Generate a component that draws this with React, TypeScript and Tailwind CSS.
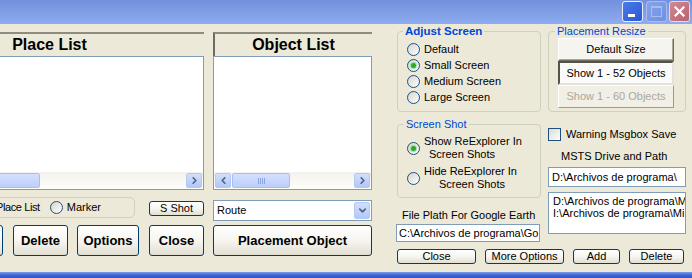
import React from "react";
import { ChevronLeft, ChevronRight, ChevronDown } from "lucide-react";

function Radio({ checked }: { checked?: boolean }) {
  return (
    <span className="flex h-[13px] w-[13px] shrink-0 items-center justify-center rounded-full border border-[#1c5180] bg-linear-to-br from-[#d6d4cc] to-white">
      {checked && (
        <span className="h-[5px] w-[5px] rounded-full bg-[#2ea82e] shadow-[0_0_1px_1px_#9ddf9d]" />
      )}
    </span>
  );
}

function ScrollArrow({ dir }: { dir: "left" | "right" | "down" }) {
  return (
    <span className="flex h-[15px] w-[16px] shrink-0 items-center justify-center rounded-[2px] border border-[#b4c8f6] bg-linear-to-b from-[#d2dffc] to-[#b3c8f7]">
      {dir === "left" && <ChevronLeft size={11} strokeWidth={3.5} color="#4d6185" />}
      {dir === "right" && <ChevronRight size={11} strokeWidth={3.5} color="#4d6185" />}
      {dir === "down" && <ChevronDown size={11} strokeWidth={3.5} color="#4d6185" />}
    </span>
  );
}

function HScroll({ thumbWidth, grip }: { thumbWidth: number; grip?: boolean }) {
  return (
    <div className="flex h-[17px] shrink-0 items-center bg-linear-to-b from-[#f3f1ec] to-[#fefefb] px-[1px]">
      <ScrollArrow dir="left" />
      <div className="flex h-[15px] flex-1 items-center pl-[1px]">
        <div
          className="flex h-[15px] items-center justify-center gap-[1px] rounded-[2px] border border-[#a8bff3] bg-linear-to-b from-[#d4e0fd] to-[#bccffa]"
          style={{ width: thumbWidth }}
        >
          {grip && (
            <>
              <span className="h-[6px] w-[1px] bg-[#8aa4e6]" />
              <span className="h-[6px] w-[1px] bg-[#8aa4e6]" />
              <span className="h-[6px] w-[1px] bg-[#8aa4e6]" />
              <span className="h-[6px] w-[1px] bg-[#8aa4e6]" />
            </>
          )}
        </div>
      </div>
      <ScrollArrow dir="right" />
    </div>
  );
}

function ListPanel({
  title,
  widthClass,
  thumbWidth,
  grip,
}: {
  title: string;
  widthClass: string;
  thumbWidth: number;
  grip?: boolean;
}) {
  return (
    <div className={"flex shrink-0 flex-col " + widthClass}>
      <div className="flex h-[24px] items-center justify-center border-t-2 border-l-2 border-t-[#8e8b7f] border-l-[#6f6d63] text-[16px] font-bold leading-none">
        {title}
      </div>
      <div className="flex h-[134px] flex-col justify-end border border-[#7f9db9] bg-white">
        <HScroll thumbWidth={thumbWidth} grip={grip} />
      </div>
    </div>
  );
}

function XpButton({
  children,
  className,
}: {
  children?: React.ReactNode;
  className: string;
}) {
  return (
    <div
      className={
        "flex shrink-0 items-center justify-center rounded-[3px] border border-[#003c74] bg-linear-to-b from-white via-[#f6f5f0] to-[#e2dfd2] text-black " +
        className
      }
    >
      {children}
    </div>
  );
}

export default function App() {
  return (
    <div className="flex h-[278px] w-[692px] flex-col overflow-hidden bg-[#ece9d8] font-['Liberation_Sans',Arial,sans-serif] text-[11px] leading-none text-black">
      {/* Title bar */}
      <div className="flex h-[24px] shrink-0 items-start justify-end bg-linear-to-b from-[#7390dc] to-[#8eacf0] pr-[2px] pt-[1px]">
        <div className="flex h-[21px] w-[21px] items-end justify-start rounded-[3px] border border-[#e8eefc] bg-linear-to-br from-[#4c7ae8] to-[#2a58d4] pb-[4px] pl-[5px]">
          <span className="h-[3px] w-[7px] bg-white" />
        </div>
        <div className="ml-[3px] flex h-[21px] w-[21px] items-center justify-center rounded-[3px] border border-[#a9bdf0] bg-linear-to-br from-[#86a2ea] to-[#6f8fe2]">
          <span className="h-[11px] w-[11px] border border-t-2 border-[#a9bcef]" />
        </div>
        <div className="ml-[2px] flex h-[21px] w-[21px] items-center justify-center rounded-[3px] border border-[#ecd7dc] bg-linear-to-br from-[#d08a92] to-[#b9626e]">
          <svg width="11" height="11" viewBox="0 0 11 11">
            <path d="M1.5 1.5 L9.5 9.5 M9.5 1.5 L1.5 9.5" stroke="white" strokeWidth="2.2" strokeLinecap="square" />
          </svg>
        </div>
      </div>

      {/* Main */}
      <div className="flex flex-1 items-start">
        {/* Left section */}
        <div className="ml-[-107px] flex w-[479px] shrink-0 flex-col pt-[8px]">
          <div className="flex gap-[9px]">
            <ListPanel title="Place List" widthClass="w-[311px]" thumbWidth={128} />
            <ListPanel title="Object List" widthClass="w-[159px]" thumbWidth={58} grip />
          </div>

          <div className="mt-[6px] flex h-[25px] items-start">
            <div className="ml-[47px] mt-[1px] flex h-[21px] w-[195px] items-center justify-end rounded-[5px] border border-[#d0d0bf] pr-[33px]">
              <Radio />
              <span className="ml-[4px] tracking-[-0.4px]">Place List</span>
              <span className="ml-[10px]">
                <Radio />
              </span>
              <span className="ml-[4px]">Marker</span>
            </div>
            <XpButton className="ml-[14px] mt-[5px] h-[15px] w-[55px]">S Shot</XpButton>
            <div className="ml-[9px] mt-[4px] flex h-[21px] w-[159px] items-center border border-[#7f9db9] bg-white pl-[3px] pr-[1px]">
              <span className="flex-1">Route</span>
              <span className="flex h-[17px] w-[16px] items-center justify-center rounded-[2px] border border-[#b4c8f6] bg-linear-to-b from-[#d2dffc] to-[#b3c8f7]">
                <ChevronDown size={11} strokeWidth={3.5} color="#4d6185" />
              </span>
            </div>
          </div>

          <div className="mt-[4px] flex h-[31px] text-[13px] font-bold">
            <XpButton className="ml-[56px] h-[31px] w-[54px]" />
            <XpButton className="ml-[10px] h-[31px] w-[55px]">Delete</XpButton>
            <XpButton className="ml-[9px] h-[31px] w-[62px]">Options</XpButton>
            <XpButton className="ml-[10px] h-[31px] w-[55px]">Close</XpButton>
            <XpButton className="ml-[9px] h-[31px] w-[159px]">Placement Object</XpButton>
          </div>
        </div>

        {/* Right section */}
        <div className="ml-[25px] flex w-[289px] shrink-0 flex-col">
          <div className="flex items-start gap-[7px]">
            {/* Column A */}
            <div className="flex w-[144px] shrink-0 flex-col">
              <fieldset className="h-[88px] rounded-[4px] border border-[#d0d0bf]">
                <legend className="ml-[5px] px-[2px] text-[11.5px] font-bold leading-[14px] text-[#0046d5]">
                  Adjust Screen
                </legend>
                <div className="flex flex-col pl-[9px] pt-[3px]">
                  <div className="flex h-[16px] items-center gap-[4px]">
                    <Radio />
                    <span>Default</span>
                  </div>
                  <div className="flex h-[16px] items-center gap-[4px]">
                    <Radio checked />
                    <span>Small Screen</span>
                  </div>
                  <div className="flex h-[16px] items-center gap-[4px]">
                    <Radio />
                    <span>Medium Screen</span>
                  </div>
                  <div className="flex h-[16px] items-center gap-[4px]">
                    <Radio />
                    <span>Large Screen</span>
                  </div>
                </div>
              </fieldset>

              <fieldset className="mt-[6px] h-[80px] rounded-[4px] border border-[#d0d0bf]">
                <legend className="ml-[6px] px-[2px] leading-[13px] text-[#0046d5]">Screen Shot</legend>
                <div className="flex flex-col pl-[9px] pt-[4px]">
                  <div className="flex h-[26px] items-center gap-[4px]">
                    <Radio checked />
                    <div className="flex flex-col leading-[13px]">
                      <span>Show ReExplorer In</span>
                      <span className="pl-[5px]">Screen Shots</span>
                    </div>
                  </div>
                  <div className="mt-[4px] flex h-[26px] items-center gap-[4px]">
                    <Radio />
                    <div className="flex flex-col leading-[13px]">
                      <span>Hide ReExplorer In</span>
                      <span className="pl-[15px]">Screen Shots</span>
                    </div>
                  </div>
                </div>
              </fieldset>

              <div className="mt-[11px] pl-[5px] leading-[12px]">File Plath For Google Earth</div>
              <div className="ml-[-1px] mt-[3px] flex h-[18px] w-[144px] items-center overflow-hidden whitespace-nowrap border border-[#7f9db9] bg-white pl-[2px]">
                {"C:\\Archivos de programa\\Go"}
              </div>
            </div>

            {/* Column B */}
            <div className="flex w-[138px] shrink-0 flex-col">
              <fieldset className="h-[88px] rounded-[4px] border border-[#d0d0bf]">
                <legend className="ml-[6px] px-[2px] leading-[14px] text-[#0046d5]">Placement Resize</legend>
                <div className="flex flex-col pl-[9px]">
                  <div className="flex h-[23px] w-[116px] items-center justify-center border border-t-white border-l-white border-r-[#716f64] border-b-[#716f64] bg-[#f5f4ef] shadow-[inset_-1px_-1px_0_#aca899]">
                    Default Size
                  </div>
                  <div className="flex h-[24px] w-[116px] items-center justify-center border-2 border-t-[#555249] border-l-[#555249] border-r-[#e4e2da] border-b-[#e4e2da] bg-[#fbfbf9]">
                    Show 1 - 52 Objects
                  </div>
                  <div className="flex h-[23px] w-[116px] items-center justify-center border border-t-white border-l-white border-r-[#9d9a8c] border-b-[#9d9a8c] bg-[#f1efe6] text-[#aca899]">
                    Show 1 - 60 Objects
                  </div>
                </div>
              </fieldset>

              <div className="mt-[16px] flex h-[13px] items-center gap-[5px]">
                <span className="h-[13px] w-[13px] shrink-0 border border-[#1c5180] bg-linear-to-br from-[#dcdad2] to-white" />
                <span>Warning Msgbox Save</span>
              </div>
              <div className="mt-[9px] pl-[13px] leading-[13px]">MSTS Drive and Path</div>
              <div className="mt-[4px] flex h-[20px] items-center overflow-hidden whitespace-nowrap border border-[#7f9db9] bg-white pl-[3px]">
                {"D:\\Archivos de programa\\"}
              </div>
              <div className="mt-[5px] flex h-[42px] flex-col overflow-hidden whitespace-nowrap border border-[#7f9db9] bg-white pl-[4px] pt-[2px] leading-[12px]">
                <span>{"D:\\Archivos de programa\\M"}</span>
                <span>{"I:\\Archivos de programa\\Mi"}</span>
              </div>
            </div>
          </div>

          <div className="mt-[7px] flex h-[15px] gap-[9px]">
            <XpButton className="h-[15px] w-[79px]">Close</XpButton>
            <XpButton className="h-[15px] w-[79px]">More Options</XpButton>
            <XpButton className="h-[15px] w-[47px]">Add</XpButton>
            <XpButton className="h-[15px] w-[55px]">Delete</XpButton>
          </div>
        </div>
      </div>

      <div className="h-[6px] shrink-0 bg-linear-to-b from-[#7d9ded] via-[#3f66d4] to-[#2d55c8]" />
    </div>
  );
}
